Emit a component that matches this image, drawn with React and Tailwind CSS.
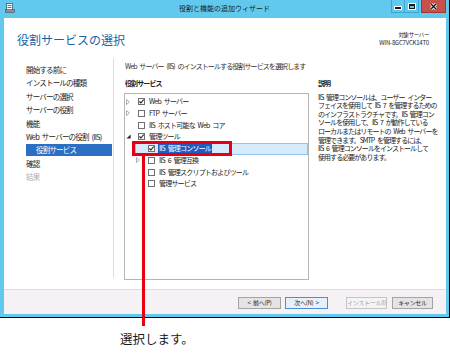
import React from 'react';

const navItems = [
  { label: '開始する前に' },
  { label: 'インストールの種類' },
  { label: 'サーバーの選択' },
  { label: 'サーバーの役割' },
  { label: '機能' },
  { label: 'Web サーバーの役割 (IIS)' },
  { label: '役割サービス', active: true },
  { label: '確認' },
  { label: '結果', disabled: true },
];

const treeRows = [
  { label: 'Web サーバー', level: 1, arrow: 'closed', checked: true },
  { label: 'FTP サーバー', level: 1, arrow: 'closed' },
  { label: 'IIS ホスト可能な Web コア', level: 1 },
  { label: '管理ツール', level: 1, arrow: 'open', checked: true },
  { label: 'IIS 管理コンソール', level: 2, checked: true, selected: true },
  { label: 'IIS 6 管理互換', level: 2, arrow: 'closed' },
  { label: 'IIS 管理スクリプトおよびツール', level: 2 },
  { label: '管理サービス', level: 2 },
];

const descLines = [
  'IIS 管理コンソールは、ユーザー インター',
  'フェイスを使用して IIS 7 を管理するための',
  'のインフラストラクチャです。IIS 管理コン',
  'ソールを使用して、IIS 7 が動作している',
  'ローカルまたはリモートの Web サーバーを',
  '管理できます。SMTP を管理するには、',
  'IIS 6 管理コンソールをインストールして',
  '使用する必要があります。',
];

function Arrow({ kind }) {
  return (
    <div className="w-[12px] h-full shrink-0 flex items-center">
      {kind === 'closed' && (
        <svg width="4" height="6" viewBox="0 0 4 6">
          <path d="M0.5 0.5 L3.5 3 L0.5 5.5 Z" fill="none" stroke="#9a9a9a" strokeWidth="0.8" />
        </svg>
      )}
      {kind === 'open' && (
        <svg width="5" height="5" viewBox="0 0 5 5">
          <path d="M4.6 0.4 L4.6 4.6 L0.4 4.6 Z" fill="#2b2b2b" />
        </svg>
      )}
    </div>
  );
}

function CheckBox({ checked }) {
  return (
    <div className="w-[7px] h-[7px] shrink-0 border border-[#707070] bg-white flex items-center justify-center">
      {checked && (
        <svg width="5" height="5" viewBox="0 0 5 5">
          <path d="M0.4 2.5 L1.9 4 L4.7 0.6" fill="none" stroke="#1e1e1e" strokeWidth="1.1" />
        </svg>
      )}
    </div>
  );
}

function TreeRow({ row }) {
  return (
    <div className="h-[11.75px] flex items-stretch">
      {row.level === 2 && <div className="w-[10px] shrink-0" />}
      <div
        className={`flex-1 flex items-center border ${
          row.selected ? 'bg-[#d5eafb] border-[#8ec4ec]' : 'border-transparent'
        }`}
      >
        <Arrow kind={row.arrow} />
        <CheckBox checked={row.checked} />
        <span
          className={`ml-[3px] px-[1px] whitespace-nowrap text-[7px] tracking-[-0.8px] [word-spacing:2px] leading-[9px] ${
            row.selected ? 'bg-[#1f5cc2] text-white' : 'text-[#222]'
          }`}
        >
          {row.label}
        </span>
      </div>
    </div>
  );
}

function WinButton({ children, variant }) {
  const styles = {
    normal: 'border-[#a3a3a3] bg-[#e4e4e4] text-[#1e1e1e]',
    focus: 'border-[#4b8fd3] bg-[#e6f0fa] text-[#1e1e1e]',
    disabled: 'border-[#c4c4c4] bg-[#f4f4f4] text-[#9c9c9c]',
  };
  return (
    <div
      className={`h-[12px] flex items-center justify-center border whitespace-nowrap text-[6px] tracking-[-0.3px] [word-spacing:1.5px] leading-[10px] ${styles[variant]}`}
    >
      {children}
    </div>
  );
}

export default function App() {
  return (
    <div className="w-[450px] h-[355px] bg-white relative overflow-hidden font-['Noto_Sans_CJK_JP','Noto_Sans',sans-serif]">
      {/* Window */}
      <div className="w-[450px] h-[318px] bg-[#62c9ee] border-r border-b border-black flex flex-col">
        {/* Title bar */}
        <div className="h-[18px] grid grid-cols-[1fr_auto_1fr] shrink-0">
          <div className="pl-[5px] pt-[3px]">
            <svg width="10" height="10" viewBox="0 0 10 10">
              <rect x="1.5" y="0.5" width="6" height="7" fill="#fff" stroke="#3a5f86" strokeWidth="0.8" />
              <rect x="2.5" y="2" width="4" height="1" fill="#3c7fc0" />
              <rect x="2.5" y="4" width="4" height="1" fill="#3c7fc0" />
              <rect x="0.5" y="6.5" width="9" height="3" fill="#8a8f96" stroke="#4b5058" strokeWidth="0.6" />
            </svg>
          </div>
          <div className="text-[7px] leading-[16px] text-[#1a1a1a] whitespace-nowrap">役割と機能の追加ウィザード</div>
          <div className="flex justify-end items-start pr-[3px]">
            <div className="w-[14px] h-[13px] border border-t-0 border-[#3aa6d4] flex items-end justify-center pb-[3px]">
              <div className="w-[6px] h-[2px] bg-[#1a1a1a] outline outline-1 outline-white" />
            </div>
            <div className="w-[14px] h-[13px] border border-t-0 border-l-0 border-[#3aa6d4] flex items-center justify-center">
              <div className="w-[6px] h-[5px] border border-t-2 border-[#1a1a1a] outline outline-1 outline-white" />
            </div>
            <div className="w-[25px] h-[13px] ml-[2px] bg-[#c7514a] border border-t-0 border-[#9c3a34] flex items-center justify-center">
              <svg width="7" height="7" viewBox="0 0 7 7">
                <path d="M1 1 L6 6 M6 1 L1 6" stroke="#fff" strokeWidth="3" />
                <path d="M1 1 L6 6 M6 1 L1 6" stroke="#1a1a1a" strokeWidth="1.5" />
              </svg>
            </div>
          </div>
        </div>

        {/* Client area */}
        <div className="flex-1 ml-[4px] mr-[3px] mb-[3px] bg-white flex flex-col">
          {/* Header */}
          <div className="h-[40px] shrink-0 flex justify-between">
            <div className="pl-[13px] pt-[16px] text-[12px] leading-[12px] text-[#1c62a6] whitespace-nowrap">
              役割サービスの選択
            </div>
            <div className="pr-[17px] pt-[13px] text-right text-[#222]">
              <div className="text-[5.5px] tracking-[-0.4px] leading-[8px]">対象サーバー</div>
              <div className="text-[6px] tracking-[-0.2px] leading-[8px]">WIN-8GC7VCK14T0</div>
            </div>
          </div>

          {/* Body */}
          <div className="flex-1 flex">
            {/* Left navigation */}
            <div className="w-[110px] shrink-0 border-r border-[#dcdcdc] mb-[11px] pl-[22px] pt-[5.3px]">
              {navItems.map((item) => (
                <div key={item.label} className="h-[13.4px] flex items-center">
                  {item.active ? (
                    <div className="w-[86px] h-[12px] bg-[#2a6fc3] text-white pl-[10px] flex items-center text-[7.5px] tracking-[-0.8px] leading-[10px] whitespace-nowrap">
                      {item.label}
                    </div>
                  ) : (
                    <div
                      className={`text-[7.5px] tracking-[-0.8px] [word-spacing:2px] leading-[10px] whitespace-nowrap ${
                        item.disabled ? 'text-[#b0b0b0]' : 'text-[#222]'
                      }`}
                    >
                      {item.label}
                    </div>
                  )}
                </div>
              ))}
            </div>

            {/* Main */}
            <div className="flex-1 ml-[10px] flex flex-col">
              <div className="mt-[3px] h-[10px] pl-[1px] text-[7px] tracking-[-0.9px] [word-spacing:2px] leading-[10px] text-[#333] whitespace-nowrap">
                Web サーバー (IIS) のインストールする役割サービスを選択します
              </div>
              <div className="flex">
                <div className="w-[185px] shrink-0">
                  <div className="mt-[7px] mb-[5px] h-[10px] pl-[1px] text-[7px] font-bold tracking-[-0.9px] leading-[10px] text-[#222]">
                    役割サービス
                  </div>
                  <div className="h-[187px] border border-[#b5b5b5] pt-[1.8px]">
                    {treeRows.map((row) => (
                      <TreeRow key={row.label} row={row} />
                    ))}
                  </div>
                </div>
                <div className="flex-1 ml-[9px]">
                  <div className="mt-[7px] h-[10px] text-[7px] font-bold tracking-[-0.9px] leading-[10px] text-[#222]">
                    説明
                  </div>
                  <div className="mt-[4.7px] text-[7px] tracking-[-0.95px] [word-spacing:2px] leading-[8.6px] text-[#222]">
                    {descLines.map((line) => (
                      <div key={line} className="whitespace-nowrap">
                        {line}
                      </div>
                    ))}
                  </div>
                </div>
              </div>
            </div>
          </div>

          {/* Footer */}
          <div className="h-[25px] shrink-0 border-t border-[#dedede] bg-[#f5f1f5] pt-[7px] pr-[13px] flex justify-end items-start">
            <div className="w-[43px]">
              <WinButton variant="normal">&lt; 前へ(P)</WinButton>
            </div>
            <div className="w-[43px] ml-[4px]">
              <WinButton variant="focus">次へ(N) &gt;</WinButton>
            </div>
            <div className="w-[41px] ml-[18px]">
              <WinButton variant="disabled">インストール(I)</WinButton>
            </div>
            <div className="w-[41px] ml-[5px]">
              <WinButton variant="normal">キャンセル</WinButton>
            </div>
          </div>
        </div>
      </div>

      {/* Annotation caption */}
      <div className="pl-[120px] pt-[14px] text-[12.5px] leading-[13px] text-[#1a1a1a] whitespace-nowrap">
        選択します。
      </div>

      {/* Red callout over the tree */}
      <div className="absolute left-[132px] top-[141px] w-[100px] h-[15px] border-[3px] border-[#e60012]" />
      <div className="absolute left-[142px] top-[155px] w-[3px] h-[171px] bg-[#e60012]" />
    </div>
  );
}
